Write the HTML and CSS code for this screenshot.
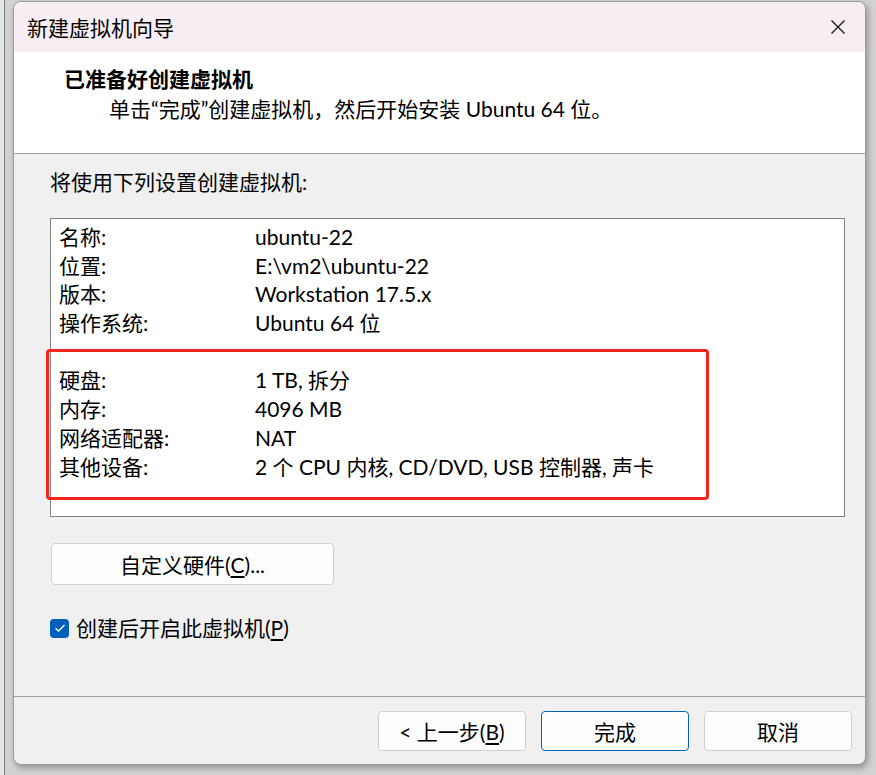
FILE: index.html
```html
<!DOCTYPE html>
<html>
<head>
    <title>新建虚拟机向导</title>
    <link rel="stylesheet" href="styles.css">
</head>
<body>
    <div class="desktop">
        <div class="wizard">
            <div class="titlebar">
                <span class="title">新建虚拟机向导</span>
                <svg class="close" width="16" height="16" viewBox="0 0 16 16">
                    <path d="M1.5 1.5 L14.5 14.5 M14.5 1.5 L1.5 14.5" stroke="#1a1a1a" stroke-width="1.4" fill="none"/>
                </svg>
            </div>

            <div class="header">
                <h1>已准备好创建虚拟机</h1>
                <p>单击“完成”创建虚拟机，然后开始安装 Ubuntu 64 位。</p>
            </div>

            <div class="content">
                <div class="intro">将使用下列设置创建虚拟机:</div>

                <div class="summary">
                    <div class="row"><span class="key">名称:</span><span>ubuntu-22</span></div>
                    <div class="row"><span class="key">位置:</span><span>E:\vm2\ubuntu-22</span></div>
                    <div class="row"><span class="key">版本:</span><span>Workstation 17.5.x</span></div>
                    <div class="row"><span class="key">操作系统:</span><span>Ubuntu 64 位</span></div>
                    <div class="row"></div>
                    <div class="row"><span class="key">硬盘:</span><span>1 TB, 拆分</span></div>
                    <div class="row"><span class="key">内存:</span><span>4096 MB</span></div>
                    <div class="row"><span class="key">网络适配器:</span><span>NAT</span></div>
                    <div class="row"><span class="key">其他设备:</span><span>2 个 CPU 内核, CD/DVD, USB 控制器, 声卡</span></div>
                    <div class="highlight"></div>
                </div>

                <button class="btn custom">自定义硬件(<u>C</u>)...</button>

                <label class="check">
                    <span class="box">
                        <svg width="12" height="10" viewBox="0 0 12 10">
                            <path d="M1.5 5.2 L4.5 8 L10.5 2" stroke="#fff" stroke-width="1.3" fill="none"/>
                        </svg>
                    </span>
                    <span>创建后开启此虚拟机(<u>P</u>)</span>
                </label>
            </div>

            <div class="footer">
                <button class="btn">&lt;&nbsp;上一步(<u>B</u>)</button>
                <button class="btn default">完成</button>
                <button class="btn">取消</button>
            </div>
        </div>
    </div>
</body>
</html>
```

FILE: styles.css
```css
body {
    margin: 0;
    font-family: "Lato", "Noto Sans CJK SC", sans-serif;
    font-size: 21px;
    color: #000;
}
.desktop {
    width: 876px;
    height: 775px;
    box-sizing: border-box;
    padding: 1px 10px 10px 13px;
    background: linear-gradient(to right, #e6e6e6 0 4px, #7a7a7a 4px 5px, #d2d2d2 5px);
}
.wizard {
    width: 853px;
    height: 764px;
    box-sizing: border-box;
    border: 1px solid #9a9a9a;
    border-radius: 8px;
    background-color: #f0f0f0;
    box-shadow: 2px 3px 6px rgba(0,0,0,0.3);
    overflow: hidden;
    display: flex;
    flex-direction: column;
}
.titlebar {
    height: 50px;
    flex-shrink: 0;
    background-color: #f7eef3;
    display: flex;
    align-items: center;
    justify-content: space-between;
    padding: 0 19px 0 13px;
}
.header {
    height: 101px;
    flex-shrink: 0;
    background-color: #fff;
    border-bottom: 1px solid #a0a0a0;
    box-sizing: content-box;
}
.header h1 {
    margin: 0;
    padding: 13px 0 0 50px;
    font-size: 21px;
    font-weight: bold;
    line-height: 28px;
}
.header p {
    margin: 2px 0 0 95px;
    line-height: 28px;
}
.content {
    flex: 1;
    padding: 14px 20px 0 36px;
}
.intro {
    line-height: 28px;
}
.summary {
    position: relative;
    margin-top: 22px;
    height: 299px;
    box-sizing: border-box;
    background-color: #fff;
    border: 1px solid #838383;
    padding: 4px 8px;
}
.row {
    display: flex;
    height: 28.7px;
    line-height: 28.7px;
    white-space: nowrap;
}
.key {
    width: 196px;
    flex-shrink: 0;
}
.highlight {
    position: absolute;
    left: -5px;
    top: 130px;
    width: 663px;
    height: 151px;
    box-sizing: border-box;
    border: 3px solid #f5241e;
    border-radius: 4px;
    pointer-events: none;
}
.btn {
    font-family: inherit;
    font-size: 21px;
    color: #000;
    background-color: #fdfdfd;
    border: 1px solid #d0d0d0;
    border-radius: 4px;
    padding: 0;
    height: 40px;
    width: 148px;
}
.btn u {
    text-underline-offset: 3px;
}
.custom {
    display: block;
    width: 283px;
    height: 42px;
    margin: 26px 0 0 1px;
}
.check {
    display: flex;
    align-items: center;
    gap: 7px;
    margin-top: 29px;
    line-height: 28px;
}
.check u {
    text-underline-offset: 3px;
}
.box {
    width: 19px;
    height: 19px;
    border-radius: 4px;
    background-color: #005fb8;
    display: flex;
    align-items: center;
    justify-content: center;
}
.footer {
    height: 68px;
    box-sizing: border-box;
    flex-shrink: 0;
    border-top: 1px solid #a0a0a0;
    display: flex;
    justify-content: flex-end;
    align-items: flex-start;
    gap: 15px;
    padding: 14px 13px 0 0;
}
.default {
    border-color: #0067c0;
}
```
